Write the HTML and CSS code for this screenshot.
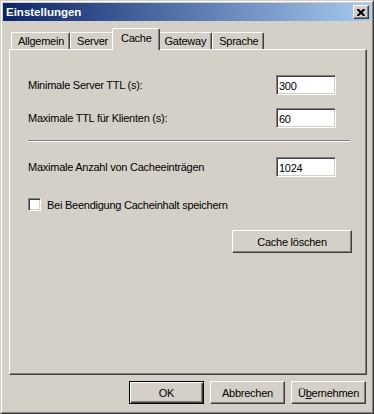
FILE: index.html
```html
<!DOCTYPE html>
<html lang="de">
<head>
    <meta charset="UTF-8">
    <title>Einstellungen</title>
    <link rel="stylesheet" href="styles.css">
</head>
<body>
    <div class="window">
        <div class="frame">
            <div class="titlebar">
                <span class="title">Einstellungen</span>
                <button class="close-btn">
                    <svg width="8" height="7" viewBox="0 0 8 7">
                        <path d="M0 0h2l2 2 2-2h2v1l-2.5 2.5 2.5 2.5v1h-2l-2-2-2 2h-2v-1l2.5-2.5-2.5-2.5z" fill="#000"/>
                    </svg>
                </button>
            </div>

            <div class="dialog-body">
                <div class="tabs">
                    <div class="tab">Allgemein</div>
                    <div class="tab">Server</div>
                    <div class="tab active">Cache</div>
                    <div class="tab">Gateway</div>
                    <div class="tab">Sprache</div>
                </div>

                <div class="panel">
                    <div class="row">
                        <label>Minimale Server TTL (s):</label>
                        <input class="field" type="text" value="300">
                    </div>
                    <div class="row row-second">
                        <label>Maximale TTL für Klienten (s):</label>
                        <input class="field" type="text" value="60">
                    </div>

                    <div class="separator"></div>

                    <div class="row row-count">
                        <label>Maximale Anzahl von Cacheeinträgen</label>
                        <input class="field" type="text" value="1024">
                    </div>

                    <div class="check-row">
                        <span class="checkbox"></span>
                        <label>Bei Beendigung Cacheinhalt speichern</label>
                    </div>

                    <div class="clear-row">
                        <button class="btn btn-wide">Cache löschen</button>
                    </div>
                </div>

                <div class="buttons">
                    <button class="btn btn-default">OK</button>
                    <button class="btn">Abbrechen</button>
                    <button class="btn">Ü<u>b</u>ernehmen</button>
                </div>
            </div>
        </div>
    </div>
</body>
</html>
```

FILE: styles.css
```css
body {
    margin: 0;
    padding: 0;
    background-color: #d4d0c8;
    font-family: "Liberation Sans", Arial, sans-serif;
    font-size: 11px;
    letter-spacing: -0.25px;
    color: #000;
}
.window {
    width: 374px;
    height: 414px;
    box-sizing: border-box;
    border: 1px solid;
    border-color: #d4d0c8 #404040 #404040 #d4d0c8;
    background: #d4d0c8;
}
.frame {
    height: 100%;
    box-sizing: border-box;
    border: 1px solid;
    border-color: #fff #808080 #808080 #fff;
    padding: 1px;
}
.titlebar {
    height: 18px;
    display: flex;
    align-items: center;
    justify-content: space-between;
    padding: 0 2px 0 3px;
    background: linear-gradient(to right, #0a246a, #a6caf0);
}
.title {
    color: #fff;
    font-weight: bold;
    font-size: 11.5px;
    letter-spacing: 0;
}
.close-btn {
    width: 16px;
    height: 14px;
    padding: 0;
    display: flex;
    align-items: center;
    justify-content: center;
    background: #d4d0c8;
    border: 1px solid;
    border-color: #fff #404040 #404040 #fff;
    box-shadow: inset -1px -1px #808080;
}
.dialog-body {
    padding: 7px 4px 0 6px;
}
.tabs {
    display: flex;
    align-items: flex-end;
    height: 21px;
    padding-left: 2px;
    position: relative;
    z-index: 1;
}
.tab {
    height: 17px;
    box-sizing: border-box;
    padding: 1px 5px 0 6px;
    border: 1px solid;
    border-bottom: none;
    border-color: #fff #404040 transparent #fff;
    box-shadow: inset -1px 0 #808080;
    border-radius: 2px 2px 0 0;
    line-height: 15px;
}
.tab.active {
    height: 22px;
    margin: 0 -2px -1px;
    padding: 2px 7px 0 8px;
    background: #d4d0c8;
    position: relative;
    z-index: 2;
}
.panel {
    height: 326px;
    box-sizing: border-box;
    border: 1px solid;
    border-color: #fff #404040 #404040 #fff;
    box-shadow: inset -1px -1px #808080;
    padding: 25px 0 0 18px;
}
.row {
    display: flex;
    align-items: center;
    justify-content: space-between;
    height: 20px;
    margin-right: 30px;
}
.row-second {
    margin-top: 13px;
}
.row-count {
    margin-top: 15px;
}
.field {
    width: 60px;
    height: 20px;
    box-sizing: border-box;
    border: 1px solid;
    border-color: #808080 #fff #fff #808080;
    box-shadow: inset 1px 1px #404040, inset -1px -1px #d4d0c8;
    background: #fff;
    padding: 2px 0 0 2px;
    font-family: inherit;
    font-size: 11px;
    letter-spacing: -0.25px;
    color: #000;
    outline: none;
}
.separator {
    margin: 12px 16px 0 0;
    border-top: 1px solid #808080;
    border-bottom: 1px solid #fff;
    height: 0;
}
.check-row {
    display: flex;
    align-items: center;
    gap: 6px;
    margin-top: 21px;
    height: 13px;
}
.checkbox {
    width: 13px;
    height: 13px;
    box-sizing: border-box;
    border: 1px solid;
    border-color: #808080 #fff #fff #808080;
    box-shadow: inset 1px 1px #404040, inset -1px -1px #d4d0c8;
    background: #fff;
}
.clear-row {
    display: flex;
    justify-content: flex-end;
    margin: 19px 14px 0 0;
}
.btn {
    width: 75px;
    height: 23px;
    box-sizing: border-box;
    background: #d4d0c8;
    border: 1px solid;
    border-color: #fff #404040 #404040 #fff;
    box-shadow: inset -1px -1px #808080;
    font-family: inherit;
    font-size: 11px;
    letter-spacing: -0.25px;
    color: #000;
    padding: 0;
}
.btn-wide {
    width: 120px;
}
.btn-default {
    border: 1px solid #000;
    box-shadow: inset 1px 1px #fff, inset -1px -1px #404040, inset -2px -2px #808080;
}
.buttons {
    display: flex;
    justify-content: flex-end;
    gap: 6px;
    margin-top: 6px;
    padding-right: 1px;
}
```
